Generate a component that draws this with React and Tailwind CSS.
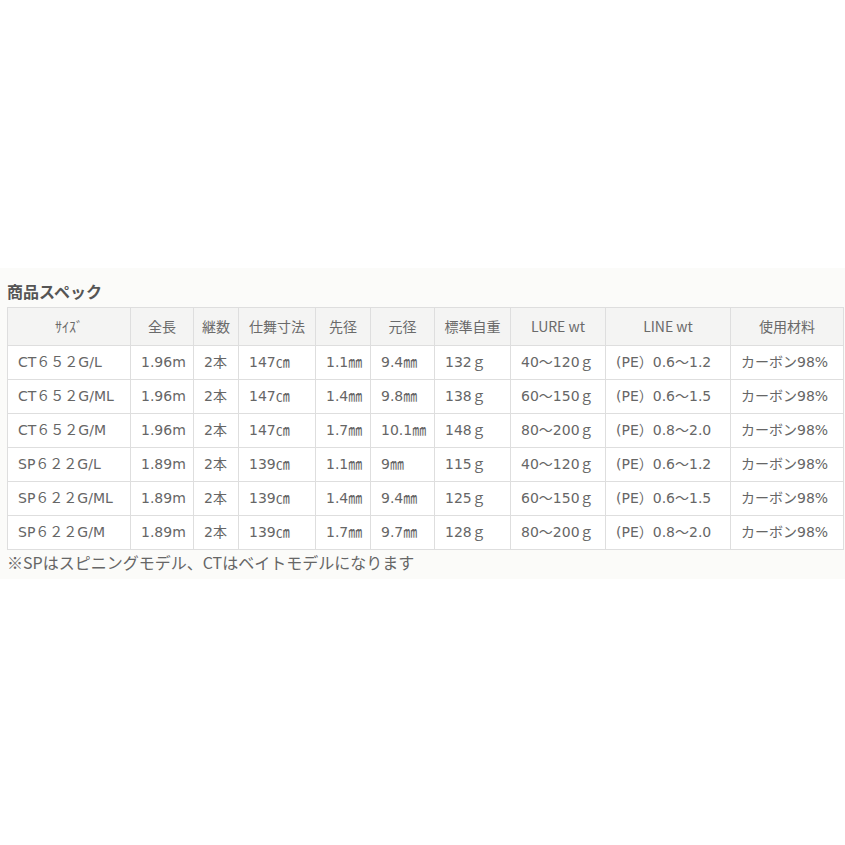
const COLS = [
  { label: "ｻｲｽﾞ", className: "w-[123px]" },
  { label: "全長", className: "w-[63px]" },
  { label: "継数", className: "w-[45px]" },
  { label: "仕舞寸法", className: "w-[77px]" },
  { label: "先径", className: "w-[55px]" },
  { label: "元径", className: "w-[64px]" },
  { label: "標準自重", className: "w-[76px]" },
  { label: "LURE wt", className: "w-[95px]" },
  { label: "LINE wt", className: "w-[125px]" },
  { label: "使用材料", className: "w-[113px]" },
];

const ROWS = [
  ["CT６５２G/L", "1.96m", "2本", "147㎝", "1.1㎜", "9.4㎜", "132ｇ", "40～120ｇ", "(PE）0.6～1.2", "カーボン98%"],
  ["CT６５２G/ML", "1.96m", "2本", "147㎝", "1.4㎜", "9.8㎜", "138ｇ", "60～150ｇ", "(PE）0.6～1.5", "カーボン98%"],
  ["CT６５２G/M", "1.96m", "2本", "147㎝", "1.7㎜", "10.1㎜", "148ｇ", "80～200ｇ", "(PE）0.8～2.0", "カーボン98%"],
  ["SP６２２G/L", "1.89m", "2本", "139㎝", "1.1㎜", "9㎜", "115ｇ", "40～120ｇ", "(PE）0.6～1.2", "カーボン98%"],
  ["SP６２２G/ML", "1.89m", "2本", "139㎝", "1.4㎜", "9.4㎜", "125ｇ", "60～150ｇ", "(PE）0.6～1.5", "カーボン98%"],
  ["SP６２２G/M", "1.89m", "2本", "139㎝", "1.7㎜", "9.7㎜", "128ｇ", "80～200ｇ", "(PE）0.8～2.0", "カーボン98%"],
];

export default function App() {
  return (
    <main className="min-h-[845px] bg-white pt-[268px] font-['DejaVu_Sans','Noto_Sans_CJK_JP',sans-serif] text-[#666]">
      <section className="bg-[#fbfbf9] pb-[6px] pl-[7px] pr-[2px] pt-[13px]">
        <h2 className="mb-[6px] font-['Noto_Sans_CJK_JP',sans-serif] text-[16px] font-bold leading-[20px] text-[#555]">
          商品スペック
        </h2>
        <table className="w-[836px] table-fixed border-collapse text-[14px]">
          <thead>
            <tr className="h-[38px] bg-[#f4f4f3]">
              {COLS.map((col) => (
                <th
                  key={col.label}
                  className={`${col.className} border border-[#dedede] px-1 text-center font-['Noto_Sans_CJK_JP',sans-serif] font-normal text-[#6a6a6a]`}
                >
                  {col.label}
                </th>
              ))}
            </tr>
          </thead>
          <tbody>
            {ROWS.map((row) => (
              <tr key={row[0]} className="h-[34px] bg-white">
                {row.map((cell, i) => (
                  <td
                    key={i}
                    className="whitespace-nowrap border border-[#dedede] pl-[10px] text-left"
                  >
                    {cell}
                  </td>
                ))}
              </tr>
            ))}
          </tbody>
        </table>
        <p className="mt-[1px] font-['Noto_Sans_CJK_JP',sans-serif] text-[16px] leading-[22px] text-[#666]">
          ※SPはスピニングモデル、CTはベイトモデルになります
        </p>
      </section>
    </main>
  );
}
